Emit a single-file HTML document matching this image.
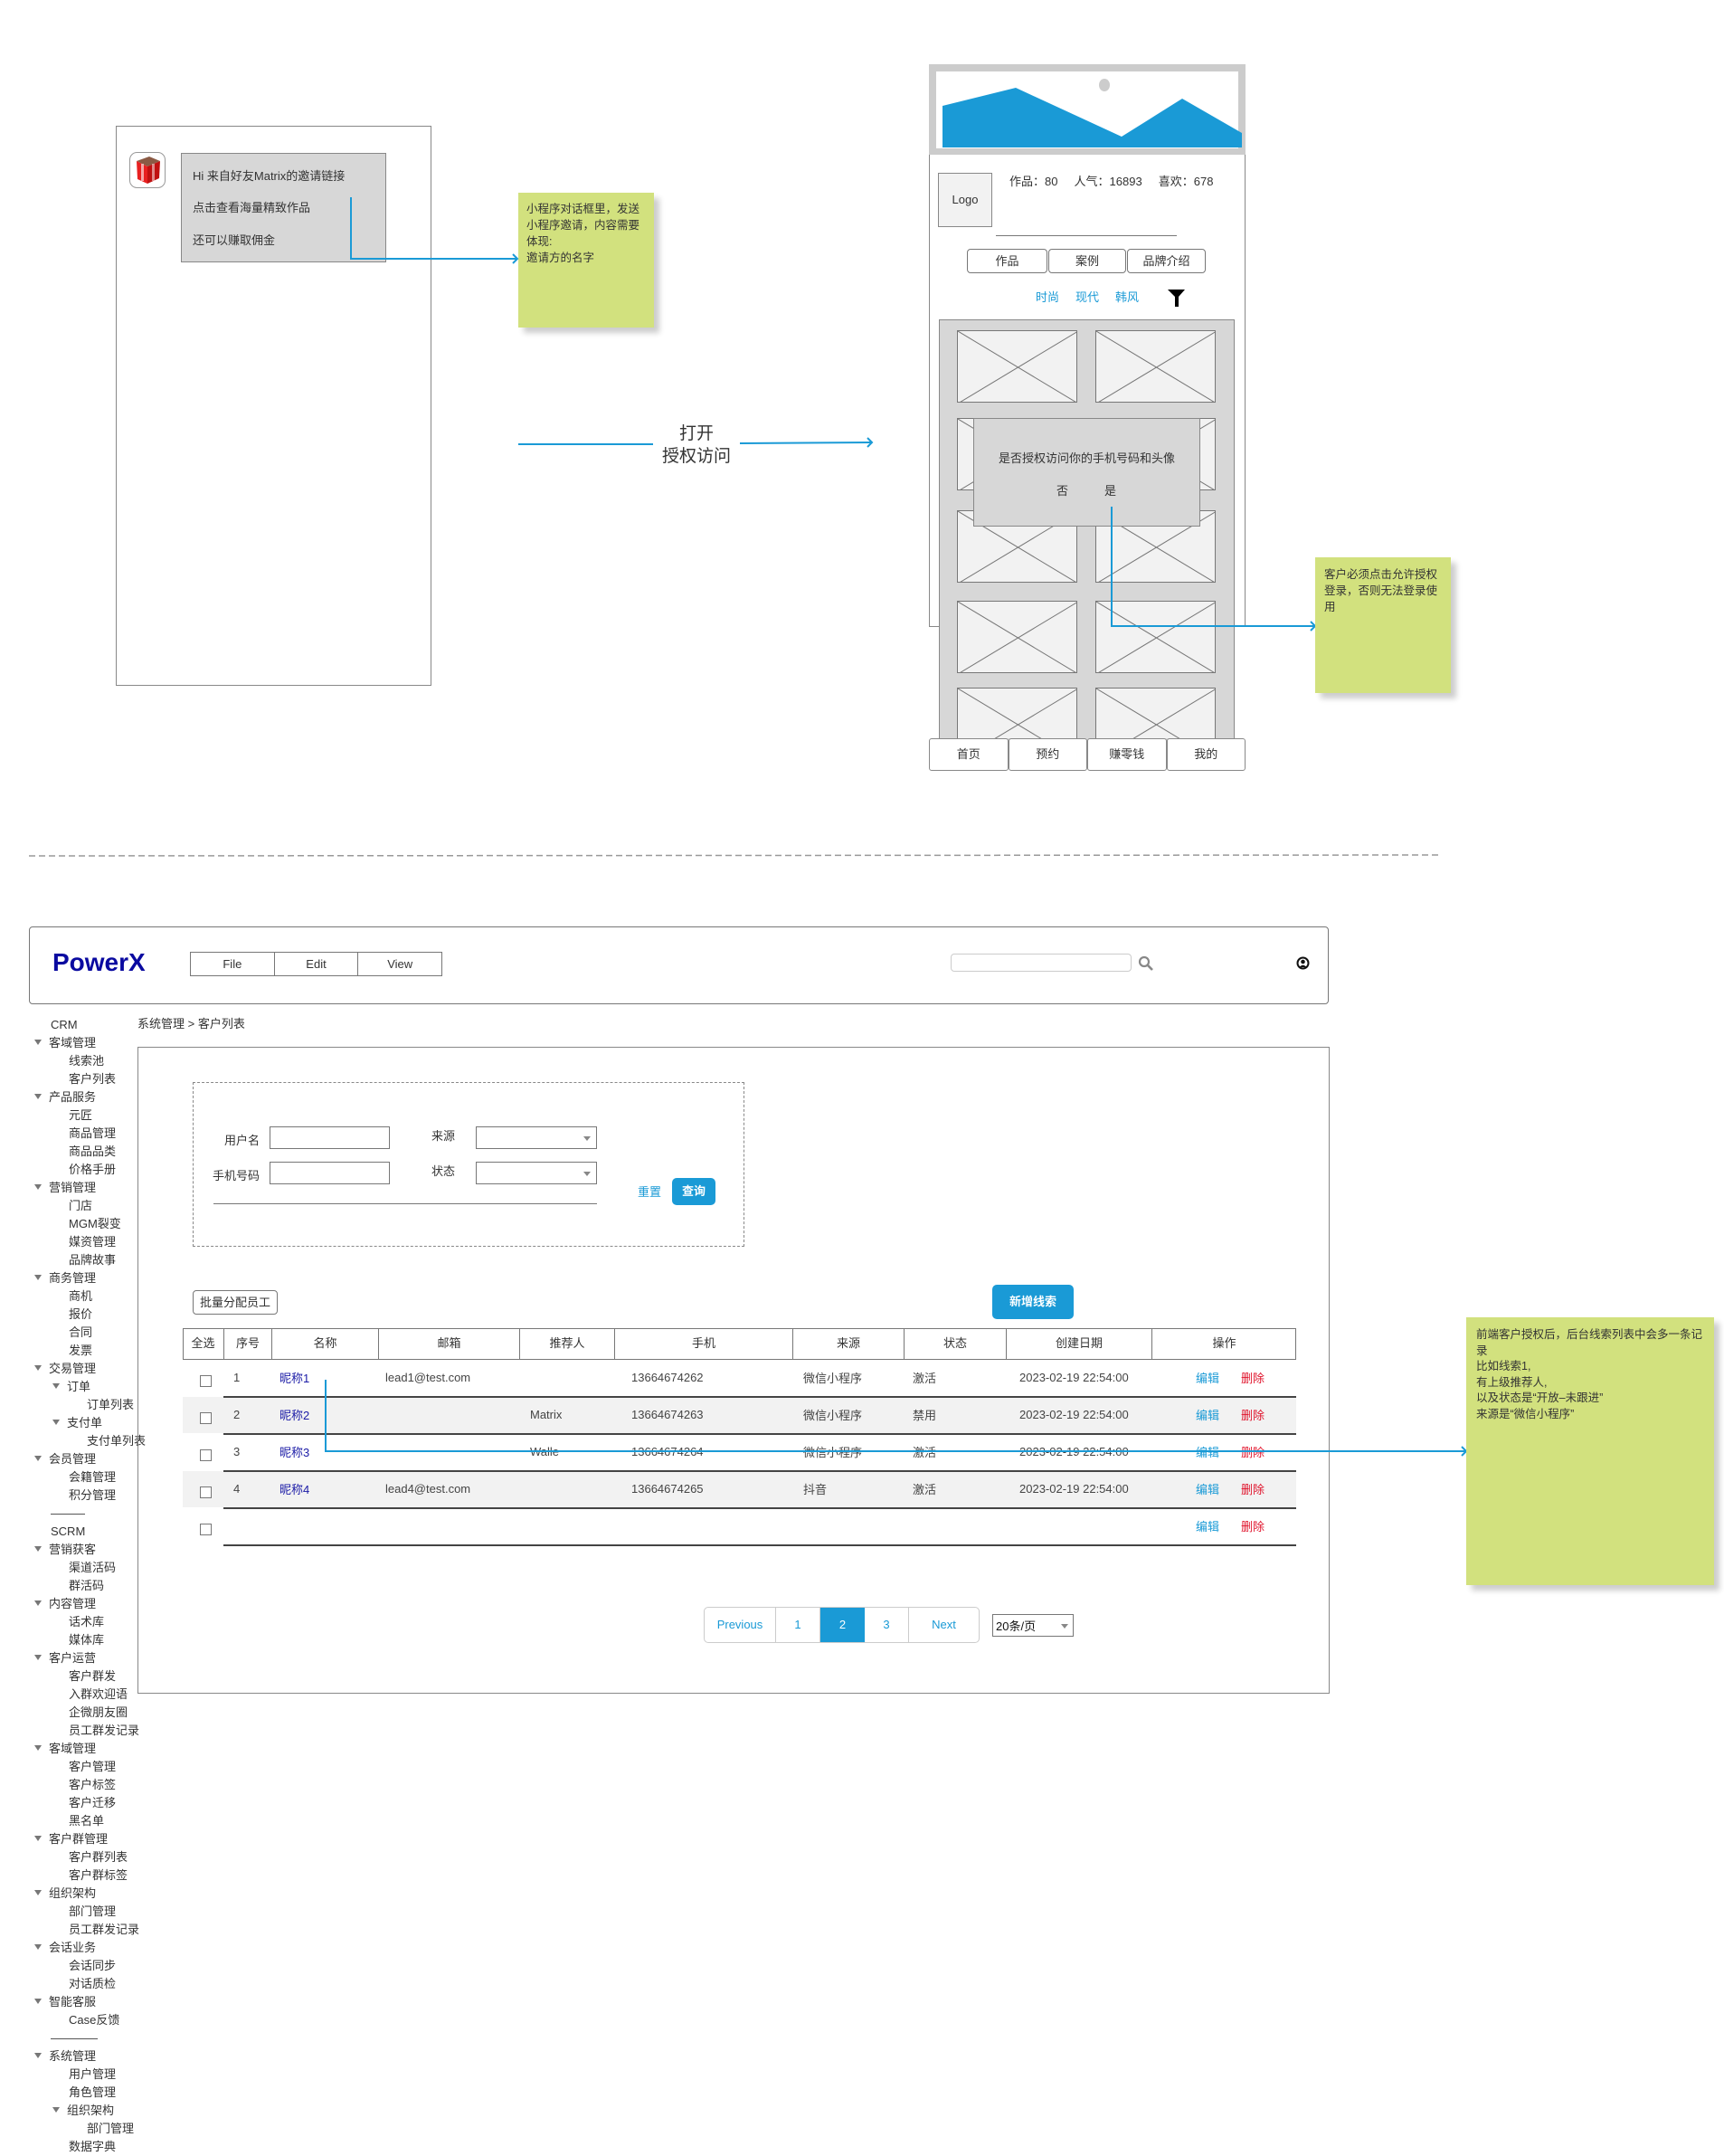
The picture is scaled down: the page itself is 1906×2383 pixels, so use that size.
<!DOCTYPE html>
<html><head><meta charset="utf-8">
<style>
*{margin:0;padding:0;box-sizing:border-box}
body{width:1906px;height:2382px;background:#fff;position:relative;overflow:hidden;font-family:"Liberation Sans","Noto Sans CJK SC",sans-serif;font-size:13px;color:#333}
.a{position:absolute}
.sticky{position:absolute;background:#d2e17e;box-shadow:6px 6px 6px rgba(0,0,0,0.2);color:#333}
.tile{position:absolute;background:#f2f2f2;border:1px solid #777;overflow:hidden}
.tile svg{position:absolute;left:0;top:0}
.side div{height:20px;line-height:20px;white-space:nowrap}
.tri{display:inline-block;width:0;height:0;border-left:4px solid transparent;border-right:4px solid transparent;border-top:6px solid #777;margin-right:8px;vertical-align:2px}
.inp{position:absolute;border:1px solid #777;background:#fff}
.sel::after{content:"";position:absolute;right:6px;top:10px;border-left:4px solid transparent;border-right:4px solid transparent;border-top:5px solid #888}
.th{position:absolute;top:1468px;height:34px;line-height:34px;text-align:center;border-right:1px solid #777;font-size:13px}
.cb{position:absolute;width:13px;height:13px;border:1px solid #777;background:#fff}
.row{position:absolute;height:20px;line-height:20px;font-size:13px;color:#444}
</style></head><body>

<!-- left phone -->
<div class="a" style="left:128px;top:139px;width:349px;height:619px;border:1px solid #888"></div>
<svg class="a" style="left:143px;top:168px" width="40" height="40" viewBox="0 0 40 40">
<rect x="0.5" y="0.5" width="39" height="39" rx="8" fill="#fff" stroke="#999"/>
<polygon points="8,10 22,5 34,10 20,16" fill="#8a5a44"/>
<polygon points="8,10 20,16 20,35 9,30" fill="#e82020"/>
<polygon points="20,16 34,10 33,29 20,35" fill="#c01010"/>
<rect x="13" y="13" width="3" height="19" fill="#fff" opacity=".6"/>
<rect x="25" y="13" width="3" height="19" fill="#fff" opacity=".5"/>
</svg>
<div class="a" style="left:200px;top:169px;width:227px;height:121px;background:#d7d7d7;border:1px solid #888"></div>
<div class="a" style="left:213px;top:186px;font-size:13px;line-height:18px">Hi 来自好友Matrix的邀请链接</div>
<div class="a" style="left:213px;top:221px;font-size:13px;line-height:18px">点击查看海量精致作品</div>
<div class="a" style="left:213px;top:257px;font-size:13px;line-height:18px">还可以赚取佣金</div>

<div class="sticky" style="left:573px;top:213px;width:150px;height:149px;padding:9px 9px;font-size:12.5px;line-height:18px">小程序对话框里，发送小程序邀请，内容需要体现:<br>邀请方的名字</div>

<!-- arrows -->
<svg class="a" style="left:0;top:0" width="1906" height="1000">
<g fill="none" stroke="#1a9ad6" stroke-width="2">
<polyline points="388,218 388,286 572,286"/>
<polyline points="567,281 572,286 567,291"/>
<line x1="573" y1="491" x2="722" y2="491"/>
<line x1="818" y1="490" x2="964" y2="489"/>
<polyline points="959,484 964,489 959,494"/>
<polyline points="1229,562 1229,692 1454,692"/>
<polyline points="1449,687 1454,692 1449,697"/>
</g>
<line x1="32" y1="946" x2="1590" y2="945" stroke="#999" stroke-width="1.5" stroke-dasharray="7,4"/>
</svg>
<div class="a" style="left:730px;top:467px;width:80px;text-align:center;font-size:19px;line-height:25px;color:#333">打开<br>授权访问</div>

<!-- right phone -->
<div class="a" style="left:1027px;top:71px;width:350px;height:622px;border:1px solid #888;background:#fff"></div>
<div class="a" style="left:1027px;top:71px;width:350px;height:100px;background:#ccc"></div>
<div class="a" style="left:1035px;top:79px;width:334px;height:85px;background:#fff"></div>
<svg class="a" style="left:1027px;top:71px" width="350" height="100">
<polygon points="15,46 96,26 213,80 280,38 346,76 346,92 15,92" fill="#1a9ad6"/>
<ellipse cx="194" cy="23" rx="6" ry="7" fill="#ccc"/>
</svg>
<div class="a" style="left:1037px;top:191px;width:60px;height:60px;background:#f2f2f2;border:1px solid #888;text-align:center;line-height:58px;font-size:13px">Logo</div>
<div class="a" style="left:1116px;top:190px;font-size:13px;white-space:pre">作品：80     人气：16893     喜欢：678</div>
<div class="a" style="left:1101px;top:260px;width:200px;height:1px;background:#777"></div>
<div class="a" style="left:1069px;top:275px;width:89px;height:27px;border:1px solid #777;border-radius:4px;text-align:center;line-height:25px">作品</div>
<div class="a" style="left:1159px;top:275px;width:86px;height:27px;border:1px solid #777;border-radius:4px;text-align:center;line-height:25px">案例</div>
<div class="a" style="left:1246px;top:275px;width:87px;height:27px;border:1px solid #777;border-radius:4px;text-align:center;line-height:25px">品牌介绍</div>
<div class="a" style="left:1145px;top:318px;color:#1a9ad6;font-size:13px">时尚</div>
<div class="a" style="left:1189px;top:318px;color:#1a9ad6;font-size:13px">现代</div>
<div class="a" style="left:1233px;top:318px;color:#1a9ad6;font-size:13px">韩风</div>
<svg class="a" style="left:1291px;top:320px" width="20" height="20"><polygon points="0,0 19,0 12,8 12,19 8,19 8,8" fill="#000"/></svg>

<div class="a" style="left:1038px;top:353px;width:327px;height:470px;background:#d7d7d7;border:1px solid #888"></div>
<div id="tiles"></div>
<script>
var cols=[1058,1211],rows=[[365,80],[462,80],[564,80],[664,80],[760,56]],h='';
rows.forEach(function(r){cols.forEach(function(c){var w=133,ht=r[1];
h+='<div class="tile" style="left:'+c+'px;top:'+r[0]+'px;width:'+w+'px;height:'+ht+'px;'+(ht==56?'border-bottom:none':'')+'"><svg width="'+w+'" height="80"><line x1="0" y1="0" x2="'+w+'" y2="80" stroke="#777"/><line x1="'+w+'" y1="0" x2="0" y2="80" stroke="#777"/></svg></div>';});});
document.getElementById('tiles').innerHTML=h;
</script>
<div class="a" style="left:1076px;top:462px;width:251px;height:120px;background:#d7d7d7;border:1px solid #888"></div>
<div class="a" style="left:1076px;top:496px;width:251px;text-align:center;font-size:13px">是否授权访问你的手机号码和头像</div>
<div class="a" style="left:1168px;top:532px;font-size:13px">否</div>
<div class="a" style="left:1221px;top:532px;font-size:13px">是</div>
<svg class="a" style="left:0;top:0" width="1906" height="1000"><polyline points="1229,560 1229,692 1454,692" fill="none" stroke="#1a9ad6" stroke-width="2"/></svg>

<div class="a" style="left:1027px;top:816px;width:350px;height:36px;display:flex">
<div style="flex:1;border:1px solid #888;border-radius:3px;background:#fff;text-align:center;line-height:34px">首页</div>
<div style="flex:1;border:1px solid #888;border-radius:3px;background:#fff;text-align:center;line-height:34px">预约</div>
<div style="flex:1;border:1px solid #888;border-radius:3px;background:#fff;text-align:center;line-height:34px">赚零钱</div>
<div style="flex:1;border:1px solid #888;border-radius:3px;background:#fff;text-align:center;line-height:34px">我的</div>
</div>

<div class="sticky" style="left:1454px;top:616px;width:150px;height:150px;padding:10px 10px;font-size:12.5px;line-height:18px">客户必须点击允许授权登录，否则无法登录使用</div>

<!-- header -->
<div class="a" style="left:32px;top:1024px;width:1437px;height:86px;border:1px solid #777;border-radius:4px"></div>
<div class="a" style="left:58px;top:1048px;font-size:28px;font-weight:bold;color:#0a0aa0">PowerX</div>
<div class="a" style="left:210px;top:1052px;width:279px;height:27px;border:1px solid #777;display:flex">
<div style="flex:1;text-align:center;line-height:25px;border-right:1px solid #777">File</div>
<div style="flex:1;text-align:center;line-height:25px;border-right:1px solid #777">Edit</div>
<div style="flex:1;text-align:center;line-height:25px">View</div></div>
<div class="a" style="left:1051px;top:1054px;width:200px;height:20px;border:1px solid #ccc;border-radius:4px"></div>
<svg class="a" style="left:1258px;top:1056px" width="18" height="18"><circle cx="7" cy="7" r="5" fill="none" stroke="#888" stroke-width="2.2"/><line x1="11" y1="11" x2="16" y2="16" stroke="#888" stroke-width="2.6"/></svg>
<svg class="a" style="left:1433px;top:1057px" width="15" height="15"><circle cx="7.5" cy="7.5" r="6" fill="none" stroke="#111" stroke-width="2"/><circle cx="7.5" cy="6" r="2.3" fill="#111"/><path d="M3.5 12 Q7.5 7.5 11.5 12" fill="#111"/></svg>

<!-- sidebar -->
<div class="a side" style="left:38px;top:1123px;font-size:13px;color:#333">
<div style="padding-left:18px">CRM</div>
<div><span class="tri"></span>客域管理</div>
<div style="padding-left:38px">线索池</div>
<div style="padding-left:38px">客户列表</div>
<div><span class="tri"></span>产品服务</div>
<div style="padding-left:38px">元匠</div>
<div style="padding-left:38px">商品管理</div>
<div style="padding-left:38px">商品品类</div>
<div style="padding-left:38px">价格手册</div>
<div><span class="tri"></span>营销管理</div>
<div style="padding-left:38px">门店</div>
<div style="padding-left:38px">MGM裂变</div>
<div style="padding-left:38px">媒资管理</div>
<div style="padding-left:38px">品牌故事</div>
<div><span class="tri"></span>商务管理</div>
<div style="padding-left:38px">商机</div>
<div style="padding-left:38px">报价</div>
<div style="padding-left:38px">合同</div>
<div style="padding-left:38px">发票</div>
<div><span class="tri"></span>交易管理</div>
<div style="padding-left:20px"><span class="tri"></span>订单</div>
<div style="padding-left:58px">订单列表</div>
<div style="padding-left:20px"><span class="tri"></span>支付单</div>
<div style="padding-left:58px">支付单列表</div>
<div><span class="tri"></span>会员管理</div>
<div style="padding-left:38px">会籍管理</div>
<div style="padding-left:38px">积分管理</div>
<div style="padding-left:18px"><span style="display:inline-block;width:38px;height:1px;background:#555;vertical-align:middle"></span></div>
<div style="padding-left:18px">SCRM</div>
<div><span class="tri"></span>营销获客</div>
<div style="padding-left:38px">渠道活码</div>
<div style="padding-left:38px">群活码</div>
<div><span class="tri"></span>内容管理</div>
<div style="padding-left:38px">话术库</div>
<div style="padding-left:38px">媒体库</div>
<div><span class="tri"></span>客户运营</div>
<div style="padding-left:38px">客户群发</div>
<div style="padding-left:38px">入群欢迎语</div>
<div style="padding-left:38px">企微朋友圈</div>
<div style="padding-left:38px">员工群发记录</div>
<div><span class="tri"></span>客域管理</div>
<div style="padding-left:38px">客户管理</div>
<div style="padding-left:38px">客户标签</div>
<div style="padding-left:38px">客户迁移</div>
<div style="padding-left:38px">黑名单</div>
<div><span class="tri"></span>客户群管理</div>
<div style="padding-left:38px">客户群列表</div>
<div style="padding-left:38px">客户群标签</div>
<div><span class="tri"></span>组织架构</div>
<div style="padding-left:38px">部门管理</div>
<div style="padding-left:38px">员工群发记录</div>
<div><span class="tri"></span>会话业务</div>
<div style="padding-left:38px">会话同步</div>
<div style="padding-left:38px">对话质检</div>
<div><span class="tri"></span>智能客服</div>
<div style="padding-left:38px">Case反馈</div>
<div style="padding-left:18px"><span style="display:inline-block;width:52px;height:1px;background:#555;vertical-align:middle"></span></div>
<div><span class="tri"></span>系统管理</div>
<div style="padding-left:38px">用户管理</div>
<div style="padding-left:38px">角色管理</div>
<div style="padding-left:20px"><span class="tri"></span>组织架构</div>
<div style="padding-left:58px">部门管理</div>
<div style="padding-left:38px">数据字典</div>
</div>

<div class="a" style="left:152px;top:1121px;font-size:13px">系统管理 &gt; 客户列表</div>
<div class="a" style="left:152px;top:1157px;width:1318px;height:715px;border:1px solid #888"></div>

<!-- filter -->
<div class="a" style="left:213px;top:1196px;width:610px;height:182px;border:1.5px dashed #888"></div>
<div class="a" style="left:248px;top:1250px">用户名</div>
<div class="inp" style="left:298px;top:1245px;width:133px;height:25px"></div>
<div class="a" style="left:235px;top:1289px">手机号码</div>
<div class="inp" style="left:298px;top:1284px;width:133px;height:25px"></div>
<div class="a" style="left:477px;top:1245px">来源</div>
<div class="inp sel" style="left:526px;top:1245px;width:134px;height:25px"></div>
<div class="a" style="left:477px;top:1284px">状态</div>
<div class="inp sel" style="left:526px;top:1284px;width:134px;height:25px"></div>
<div class="a" style="left:236px;top:1330px;width:424px;height:1px;background:#777"></div>
<div class="a" style="left:705px;top:1307px;color:#1a9ad6">重置</div>
<div class="a" style="left:743px;top:1302px;width:48px;height:30px;background:#1a9ad6;border-radius:5px;color:#fff;text-align:center;line-height:30px;font-weight:bold">查询</div>

<div class="a" style="left:213px;top:1426px;width:94px;height:27px;border:1px solid #777;border-radius:4px;text-align:center;line-height:25px">批量分配员工</div>
<div class="a" style="left:1097px;top:1420px;width:90px;height:38px;background:#1a9ad6;border-radius:5px;color:#fff;text-align:center;line-height:38px;font-weight:bold">新增线索</div>

<!-- table -->
<div class="a" style="left:202px;top:1468px;width:1231px;height:35px;border:1px solid #777"></div>
<div class="th" style="left:202px;width:46px">全选</div>
<div class="th" style="left:248px;width:53px">序号</div>
<div class="th" style="left:301px;width:118px">名称</div>
<div class="th" style="left:419px;width:156px">邮箱</div>
<div class="th" style="left:575px;width:105px">推荐人</div>
<div class="th" style="left:680px;width:197px">手机</div>
<div class="th" style="left:877px;width:123px">来源</div>
<div class="th" style="left:1000px;width:113px">状态</div>
<div class="th" style="left:1113px;width:161px">创建日期</div>
<div class="th" style="left:1274px;width:159px;border-right:none">操作</div>

<div class="a" style="left:202px;top:1544px;width:1231px;height:40px;background:#f2f2f2"></div>
<div class="a" style="left:202px;top:1626px;width:1231px;height:40px;background:#f2f2f2"></div>
<div class="a" style="left:247px;top:1543px;width:1186px;height:2px;background:#444"></div>
<div class="a" style="left:247px;top:1584px;width:1186px;height:2px;background:#444"></div>
<div class="a" style="left:247px;top:1625px;width:1186px;height:2px;background:#444"></div>
<div class="a" style="left:247px;top:1666px;width:1186px;height:2px;background:#444"></div>
<div class="a" style="left:247px;top:1707px;width:1186px;height:2px;background:#444"></div>

<div class="cb" style="left:221px;top:1520px"></div>
<div class="cb" style="left:221px;top:1561px"></div>
<div class="cb" style="left:221px;top:1602px"></div>
<div class="cb" style="left:221px;top:1643px"></div>
<div class="cb" style="left:221px;top:1684px"></div>

<div class="row" style="left:258px;top:1513px">1</div>
<div class="row" style="left:258px;top:1554px">2</div>
<div class="row" style="left:258px;top:1595px">3</div>
<div class="row" style="left:258px;top:1636px">4</div>
<div class="row" style="left:309px;top:1514px;color:#1a1aa6">昵称1</div>
<div class="row" style="left:309px;top:1555px;color:#1a1aa6">昵称2</div>
<div class="row" style="left:309px;top:1596px;color:#1a1aa6">昵称3</div>
<div class="row" style="left:309px;top:1637px;color:#1a1aa6">昵称4</div>
<div class="row" style="left:426px;top:1513px">lead1@test.com</div>
<div class="row" style="left:426px;top:1636px">lead4@test.com</div>
<div class="row" style="left:586px;top:1554px">Matrix</div>
<div class="row" style="left:586px;top:1595px">Walle</div>
<div class="row" style="left:698px;top:1513px">13664674262</div>
<div class="row" style="left:698px;top:1554px">13664674263</div>
<div class="row" style="left:698px;top:1595px">13664674264</div>
<div class="row" style="left:698px;top:1636px">13664674265</div>
<div class="row" style="left:888px;top:1514px">微信小程序</div>
<div class="row" style="left:888px;top:1555px">微信小程序</div>
<div class="row" style="left:888px;top:1596px">微信小程序</div>
<div class="row" style="left:888px;top:1637px">抖音</div>
<div class="row" style="left:1009px;top:1514px">激活</div>
<div class="row" style="left:1009px;top:1555px">禁用</div>
<div class="row" style="left:1009px;top:1596px">激活</div>
<div class="row" style="left:1009px;top:1637px">激活</div>
<div class="row" style="left:1127px;top:1513px">2023-02-19 22:54:00</div>
<div class="row" style="left:1127px;top:1554px">2023-02-19 22:54:00</div>
<div class="row" style="left:1127px;top:1595px">2023-02-19 22:54:00</div>
<div class="row" style="left:1127px;top:1636px">2023-02-19 22:54:00</div>
<div class="row" style="left:1322px;top:1514px;color:#1a9ad6">编辑</div>
<div class="row" style="left:1322px;top:1555px;color:#1a9ad6">编辑</div>
<div class="row" style="left:1322px;top:1596px;color:#1a9ad6">编辑</div>
<div class="row" style="left:1322px;top:1637px;color:#1a9ad6">编辑</div>
<div class="row" style="left:1322px;top:1678px;color:#1a9ad6">编辑</div>
<div class="row" style="left:1372px;top:1514px;color:#e0142c">删除</div>
<div class="row" style="left:1372px;top:1555px;color:#e0142c">删除</div>
<div class="row" style="left:1372px;top:1596px;color:#e0142c">删除</div>
<div class="row" style="left:1372px;top:1637px;color:#e0142c">删除</div>
<div class="row" style="left:1372px;top:1678px;color:#e0142c">删除</div>

<svg class="a" style="left:0;top:1400px" width="1906" height="300">
<g fill="none" stroke="#1a9ad6" stroke-width="2">
<polyline points="360,125 360,204 1621,204"/>
<polyline points="1616,199 1621,204 1616,209"/>
</g></svg>

<!-- pagination -->
<div class="a" style="left:778px;top:1776px;width:305px;height:40px;border:1px solid #ccc;border-radius:5px;display:flex;overflow:hidden;color:#1a9ad6;font-size:13px">
<div style="width:79px;text-align:center;line-height:38px;border-right:1px solid #ccc">Previous</div>
<div style="width:49px;text-align:center;line-height:38px;border-right:1px solid #ccc">1</div>
<div style="width:49px;text-align:center;line-height:38px;background:#1a9ad6;color:#fff">2</div>
<div style="width:49px;text-align:center;line-height:38px;border-right:1px solid #ccc">3</div>
<div style="flex:1;text-align:center;line-height:38px">Next</div>
</div>
<div class="a" style="left:1097px;top:1784px;width:90px;height:25px;border:1px solid #777;font-size:13px;line-height:25px;padding-left:3px;color:#111">20条/页</div>
<div class="a" style="left:1173px;top:1795px;border-left:4px solid transparent;border-right:4px solid transparent;border-top:5px solid #888"></div>

<div class="sticky" style="left:1621px;top:1456px;width:274px;height:296px;padding:11px 11px;font-size:12.5px;line-height:17.5px">前端客户授权后，后台线索列表中会多一条记录<br>比如线索1,<br>有上级推荐人,<br>以及状态是“开放–未跟进”<br>来源是“微信小程序”</div>

</body></html>
